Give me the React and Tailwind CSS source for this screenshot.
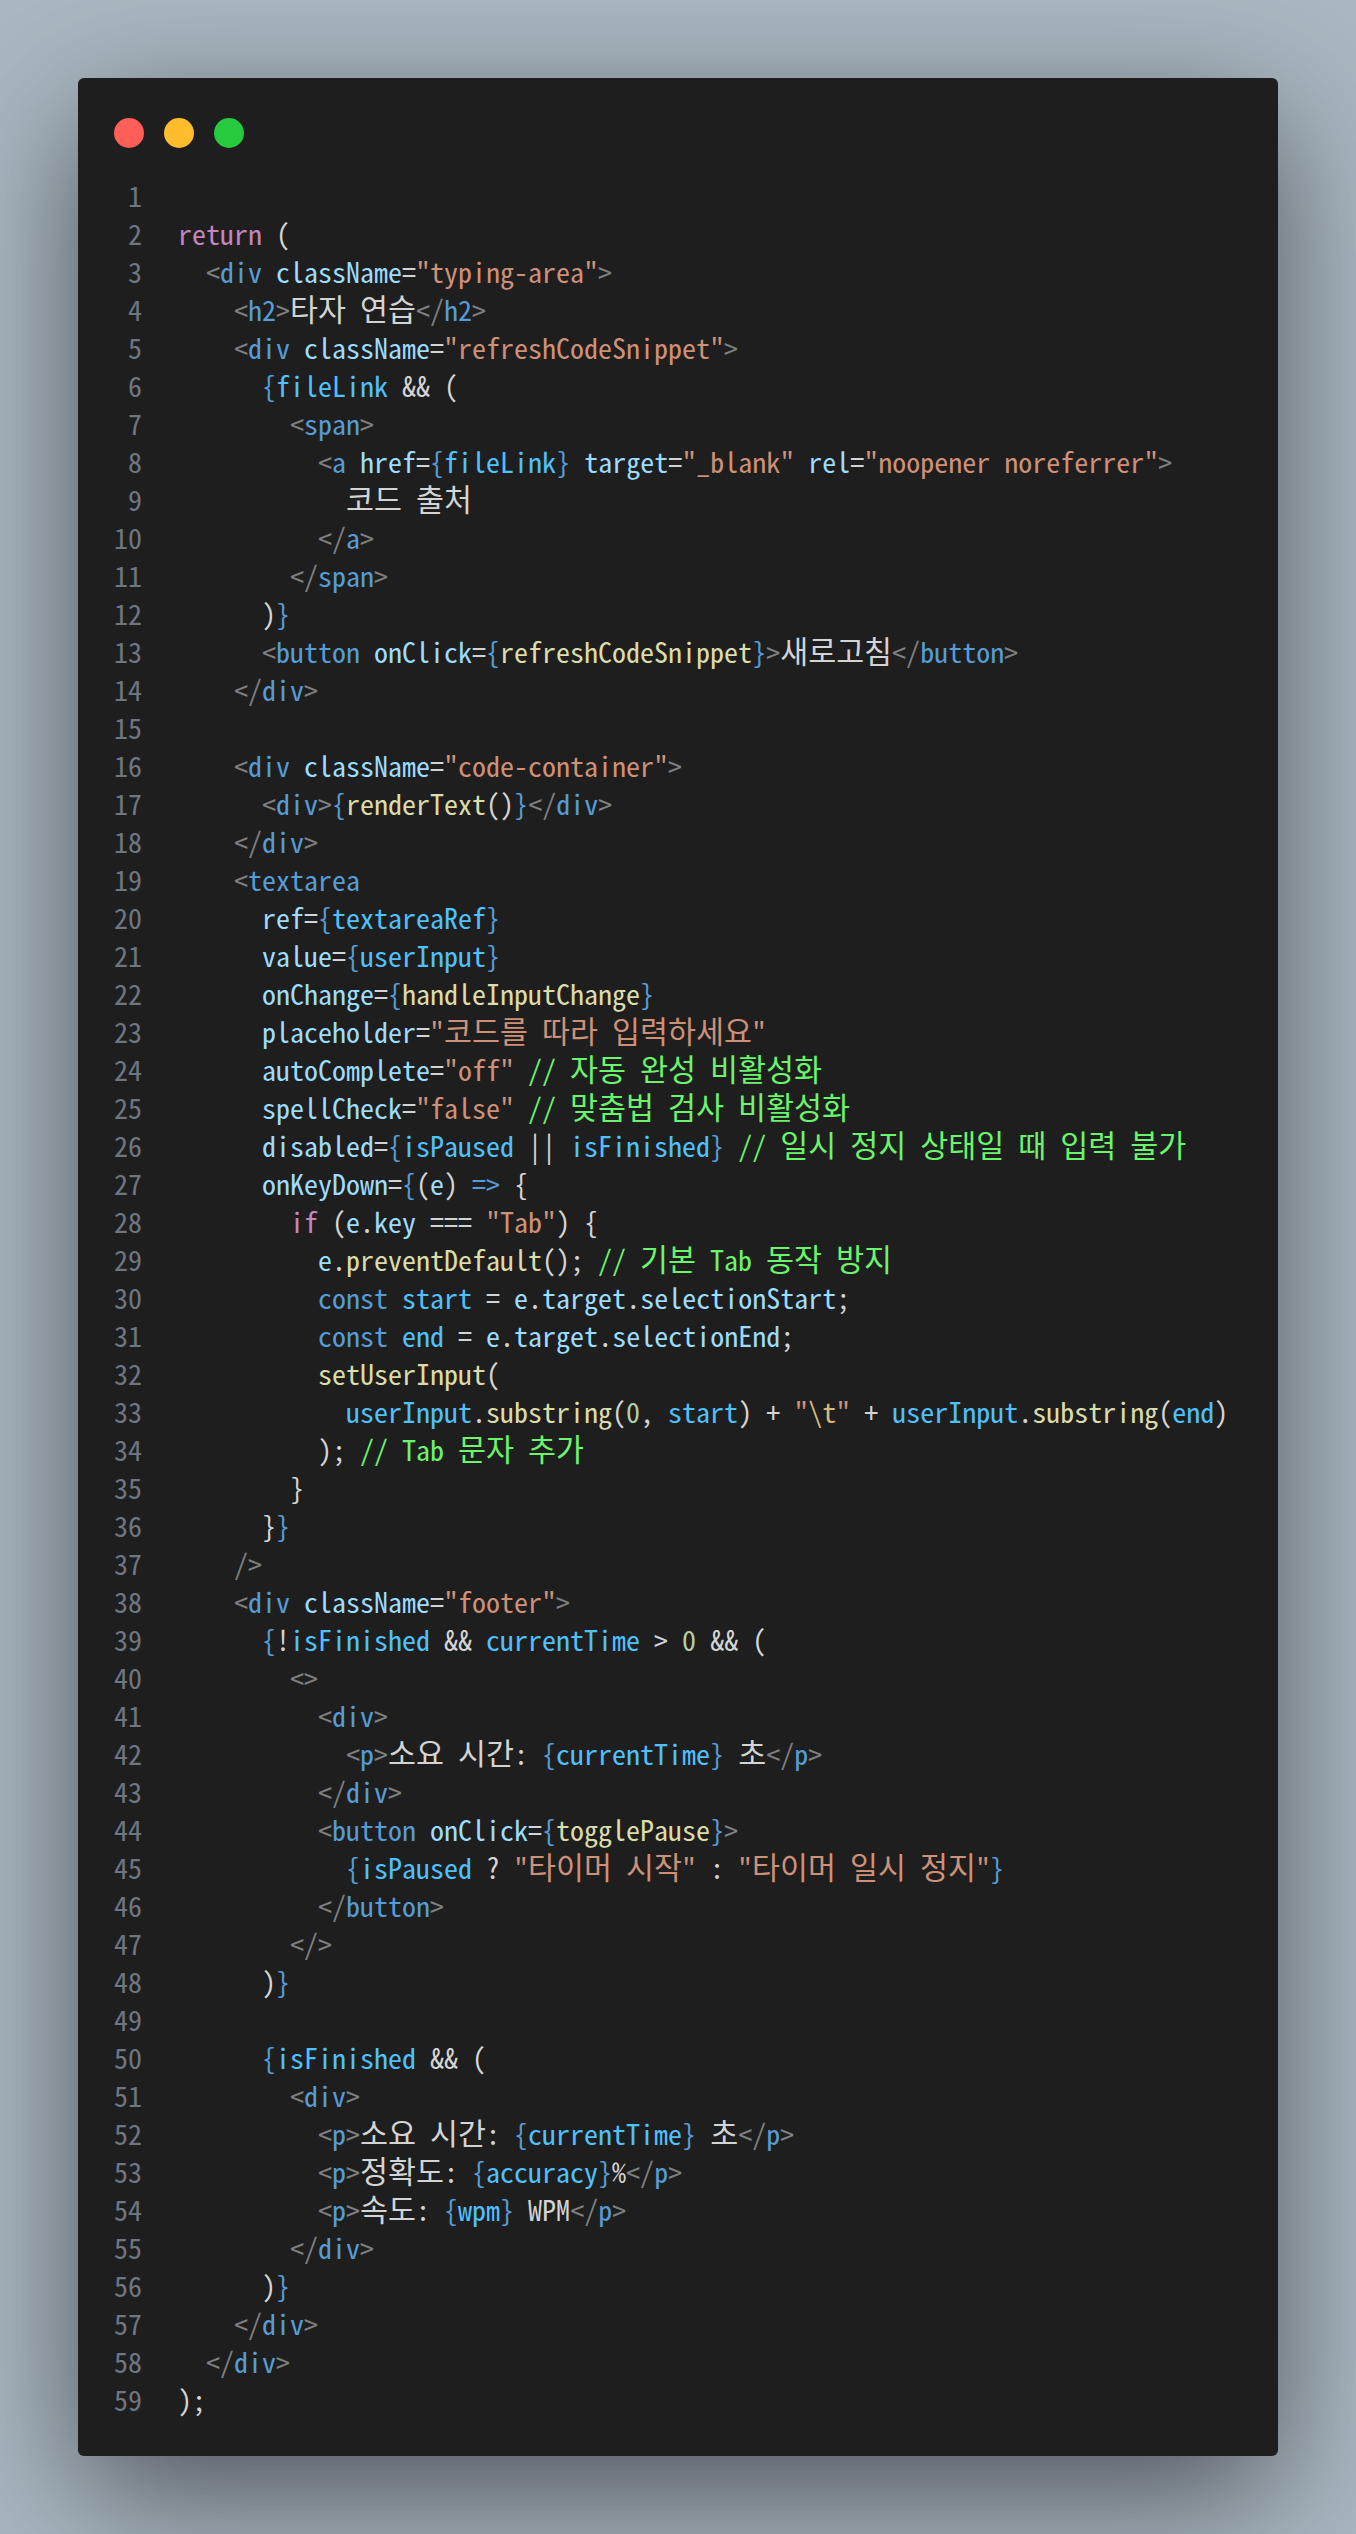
// token colours, VS Code dark style
const P = 'text-[#808080]'
const T = 'text-[#569cd6]'
const A = 'text-[#9cdcfe]'
const S = 'text-[#ce9178]'
const X = 'text-[#d4d4d4]'
const V = 'text-[#4fc1ff]'
const F = 'text-[#dcdcaa]'
const K = 'text-[#c586c0]'
const C = 'text-[#6bf56b]'
const N = 'text-[#b5cea8]'
const E = 'text-[#d7ba7d]'

const open = (name) => [[P, '<'], [T, name]]
const close = (name) => [[P, '</'], [T, name], [P, '>']]
const attr = (name, value) => [[A, name], [X, '='], [S, value]]
const bind = (name, cls, value) => [[A, name], [X, '='], [T, '{'], [cls, value], [T, '}']]
const sp = (n) => [X, ' '.repeat(n)]

const lines = [
  [],
  [[K, 'return'], [X, ' (']],
  [sp(2), ...open('div'), [X, ' '], ...attr('className', '"typing-area"'), [P, '>']],
  [sp(4), ...open('h2'), [P, '>'], [X, '타자 연습'], ...close('h2')],
  [sp(4), ...open('div'), [X, ' '], ...attr('className', '"refreshCodeSnippet"'), [P, '>']],
  [sp(6), [T, '{'], [V, 'fileLink'], [X, ' && (']],
  [sp(8), ...open('span'), [P, '>']],
  [sp(10), ...open('a'), [X, ' '], ...bind('href', V, 'fileLink'), [X, ' '], ...attr('target', '"_blank"'), [X, ' '], ...attr('rel', '"noopener noreferrer"'), [P, '>']],
  [sp(12), [X, '코드 출처']],
  [sp(10), ...close('a')],
  [sp(8), ...close('span')],
  [sp(6), [X, ')'], [T, '}']],
  [sp(6), ...open('button'), [X, ' '], ...bind('onClick', F, 'refreshCodeSnippet'), [P, '>'], [X, '새로고침'], ...close('button')],
  [sp(4), ...close('div')],
  [],
  [sp(4), ...open('div'), [X, ' '], ...attr('className', '"code-container"'), [P, '>']],
  [sp(6), ...open('div'), [P, '>'], [T, '{'], [F, 'renderText'], [X, '()'], [T, '}'], ...close('div')],
  [sp(4), ...close('div')],
  [sp(4), ...open('textarea')],
  [sp(6), ...bind('ref', V, 'textareaRef')],
  [sp(6), ...bind('value', V, 'userInput')],
  [sp(6), ...bind('onChange', F, 'handleInputChange')],
  [sp(6), ...attr('placeholder', '"코드를 따라 입력하세요"')],
  [sp(6), ...attr('autoComplete', '"off"'), [X, ' '], [C, '// 자동 완성 비활성화']],
  [sp(6), ...attr('spellCheck', '"false"'), [X, ' '], [C, '// 맞춤법 검사 비활성화']],
  [sp(6), [A, 'disabled'], [X, '='], [T, '{'], [V, 'isPaused'], [X, ' || '], [V, 'isFinished'], [T, '}'], [X, ' '], [C, '// 일시 정지 상태일 때 입력 불가']],
  [sp(6), [A, 'onKeyDown'], [X, '='], [T, '{'], [X, '('], [A, 'e'], [X, ')'], [T, ' =>'], [X, ' {']],
  [sp(8), [K, 'if'], [X, ' ('], [A, 'e'], [X, '.'], [A, 'key'], [X, ' === '], [S, '"Tab"'], [X, ') {']],
  [sp(10), [A, 'e'], [X, '.'], [F, 'preventDefault'], [X, '(); '], [C, '// 기본 Tab 동작 방지']],
  [sp(10), [T, 'const'], [X, ' '], [V, 'start'], [X, ' = '], [A, 'e'], [X, '.'], [A, 'target'], [X, '.'], [A, 'selectionStart'], [X, ';']],
  [sp(10), [T, 'const'], [X, ' '], [V, 'end'], [X, ' = '], [A, 'e'], [X, '.'], [A, 'target'], [X, '.'], [A, 'selectionEnd'], [X, ';']],
  [sp(10), [F, 'setUserInput'], [X, '(']],
  [sp(12), [V, 'userInput'], [X, '.'], [F, 'substring'], [X, '('], [N, '0'], [X, ', '], [V, 'start'], [X, ') + '], [S, '"'], [E, '\\t'], [S, '"'], [X, ' + '], [V, 'userInput'], [X, '.'], [F, 'substring'], [X, '('], [V, 'end'], [X, ')']],
  [sp(10), [X, '); '], [C, '// Tab 문자 추가']],
  [sp(8), [X, '}']],
  [sp(6), [X, '}'], [T, '}']],
  [sp(4), [P, '/>']],
  [sp(4), ...open('div'), [X, ' '], ...attr('className', '"footer"'), [P, '>']],
  [sp(6), [T, '{'], [X, '!'], [V, 'isFinished'], [X, ' && '], [V, 'currentTime'], [X, ' > '], [N, '0'], [X, ' && (']],
  [sp(8), [P, '<>']],
  [sp(10), ...open('div'), [P, '>']],
  [sp(12), ...open('p'), [P, '>'], [X, '소요 시간: '], [T, '{'], [V, 'currentTime'], [T, '}'], [X, ' 초'], ...close('p')],
  [sp(10), ...close('div')],
  [sp(10), ...open('button'), [X, ' '], ...bind('onClick', F, 'togglePause'), [P, '>']],
  [sp(12), [T, '{'], [V, 'isPaused'], [X, ' ? '], [S, '"타이머 시작"'], [X, ' : '], [S, '"타이머 일시 정지"'], [T, '}']],
  [sp(10), ...close('button')],
  [sp(8), [P, '</>']],
  [sp(6), [X, ')'], [T, '}']],
  [],
  [sp(6), [T, '{'], [V, 'isFinished'], [X, ' && (']],
  [sp(8), ...open('div'), [P, '>']],
  [sp(10), ...open('p'), [P, '>'], [X, '소요 시간: '], [T, '{'], [V, 'currentTime'], [T, '}'], [X, ' 초'], ...close('p')],
  [sp(10), ...open('p'), [P, '>'], [X, '정확도: '], [T, '{'], [V, 'accuracy'], [T, '}'], [X, '%'], ...close('p')],
  [sp(10), ...open('p'), [P, '>'], [X, '속도: '], [T, '{'], [V, 'wpm'], [T, '}'], [X, ' WPM'], ...close('p')],
  [sp(8), ...close('div')],
  [sp(6), [X, ')'], [T, '}']],
  [sp(4), ...close('div')],
  [sp(2), ...close('div')],
  [[X, ');']],
]

// hangul in this font is 0.92em wide, bump the size so it fills two cells
const Token = ({ cls, text }) => (
  <span className={cls}>
    {text.split(/([가-힣]+)/).map((part, i) =>
      i % 2 ? <span key={i} className="text-[30.43px] leading-none">{part}</span> : part
    )}
  </span>
)

const App = () => {
  return (
    <div className="min-h-screen bg-[#abb8c3] p-[78px] font-['Noto_Sans_Mono_CJK_KR','Noto_Sans_CJK_KR',monospace] text-[28px] leading-[38px]">
      <div className="rounded-md bg-[#1e1e1e] px-9 pt-10 pb-[38px] shadow-[0_40px_136px_rgba(0,0,0,0.55)]">
        <div className="mb-7 flex gap-5">
          <span className="h-[30px] w-[30px] rounded-full bg-[#ff5f56]" />
          <span className="h-[30px] w-[30px] rounded-full bg-[#ffbd2e]" />
          <span className="h-[30px] w-[30px] rounded-full bg-[#27c93f]" />
        </div>
        <div>
          {lines.map((tokens, i) => (
            <div key={i} className="flex h-[38px] whitespace-pre">
              <span className="mr-9 w-7 text-right text-[#6e7681]">{i + 1}</span>
              <code className="font-['Noto_Sans_Mono_CJK_KR','Noto_Sans_CJK_KR',monospace]">
                {tokens.map(([cls, text], j) => (
                  <Token key={j} cls={cls} text={text} />
                ))}
              </code>
            </div>
          ))}
        </div>
      </div>
    </div>
  )
}

export default App
